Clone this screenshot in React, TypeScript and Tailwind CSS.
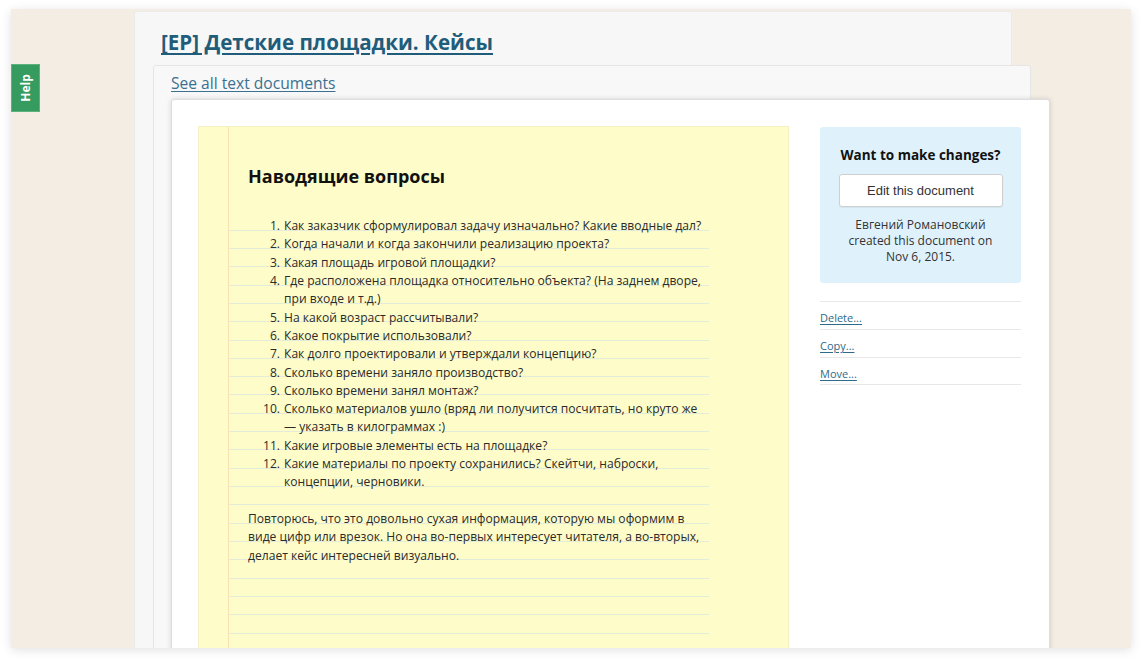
import React from 'react';

const QUESTIONS: React.ReactNode[] = [
  'Как заказчик сформулировал задачу изначально? Какие вводные дал?',
  'Когда начали и когда закончили реализацию проекта?',
  'Какая площадь игровой площадки?',
  <>Где расположена площадка относительно объекта? (На заднем дворе,<br />при входе и т.д.)</>,
  'На какой возраст рассчитывали?',
  'Какое покрытие использовали?',
  'Как долго проектировали и утверждали концепцию?',
  'Сколько времени заняло производство?',
  'Сколько времени занял монтаж?',
  <>Сколько материалов ушло (вряд ли получится посчитать, но круто же<br />— указать в килограммах :)</>,
  'Какие игровые элементы есть на площадке?',
  <>Какие материалы по проекту сохранились? Скейтчи, наброски,<br />концепции, черновики.</>,
];

const ACTIONS = ['Delete...', 'Copy...', 'Move...'];

export default function App() {
  return (
    <div className="w-[1142px] h-[662px] bg-white pt-[9px] pl-[11px] font-['Open_Sans',sans-serif]">
      <div className="relative w-[1120px] h-[639px] bg-[#f4ede4] overflow-hidden shadow-[0_2px_10px_rgba(0,0,0,0.12)]">
        {/* Help tab */}
        <div className="absolute left-0 top-[55px] w-[29px] h-[48px] bg-[#369b5e] border border-[#5cb27f] flex items-center justify-center">
          <span className="-rotate-90 text-white text-[12px] font-bold leading-none">Help</span>
        </div>

        {/* Project panel */}
        <div className="ml-[123px] mt-[2px] w-[878px] h-[700px] bg-[#f7f7f7] border border-[#ebebeb] rounded-[3px] pt-[16px] pl-[26px]">
          <div className="text-[20.6px] leading-[28px] font-bold">
            <a href="#" className="text-[#1f5d7a] underline underline-offset-[3px]">
              [EP] Детские площадки. Кейсы
            </a>
          </div>

          {/* Documents panel */}
          <div className="-ml-[8px] mt-[9px] w-[878px] h-[700px] bg-[#f8f8f8] border border-[#e6e6e6] rounded-[3px] pt-[6px] pl-[17px]">
            <div className="text-[15.6px] leading-[22px]">
              <a href="#" className="text-[#3a7191] underline underline-offset-[2px]">
                See all text documents
              </a>
            </div>

            {/* Document card */}
            <div className="mt-[5px] w-[879px] h-[700px] bg-white border border-[#dedede] rounded-[3px] shadow-[0_0_5px_rgba(0,0,0,0.15)] pt-[26px] pl-[26px] flex gap-[31px]">
              {/* Paper */}
              <div className="w-[591px] h-[600px] bg-[#fefdc9] border border-[#f3f0c4] flex">
                <div className="w-[30px] shrink-0 border-r border-[#f8e1b4]" />
                <div className="w-[480px]">
                  <h2 className="pl-[19px] pt-[37px] text-[18px] leading-[24px] font-bold text-[#111]">
                    Наводящие вопросы
                  </h2>
                  <div className="mt-[29px] pb-[80px] text-[12.1px] leading-[18.32px] text-[#2b2b2b] bg-[image:repeating-linear-gradient(to_bottom,transparent_0px,transparent_12.6px,#e3ebd9_12.6px,#e3ebd9_13.6px,transparent_13.6px,transparent_18.32px)]">
                    <ol>
                      {QUESTIONS.map((q, i) => (
                        <li key={i} className="flex">
                          <span className="w-[55px] shrink-0 text-right pr-[4px]">{i + 1}.</span>
                          <span className="whitespace-nowrap">{q}</span>
                        </li>
                      ))}
                    </ol>
                    <p className="mt-[18.32px] pl-[19px] whitespace-nowrap">
                      Повторюсь, что это довольно сухая информация, которую мы оформим в<br />
                      виде цифр или врезок. Но она во-первых интересует читателя, а во-вторых,<br />
                      делает кейс интересней визуально.
                    </p>
                  </div>
                </div>
              </div>

              {/* Sidebar */}
              <div className="w-[201px] mt-[1px]">
                <div className="bg-[#dff2fc] rounded-[3px] pt-[18px] pb-[18px] px-[10px] text-center">
                  <h3 className="text-[13.5px] leading-[20px] font-bold text-[#111] whitespace-nowrap">Want to make changes?</h3>
                  <button className="mt-[9px] w-[164px] h-[33px] bg-white border border-[#cfcfcf] rounded-[3px] shadow-[0_1px_1px_rgba(0,0,0,0.06)] font-['Liberation_Sans',sans-serif] text-[13px] text-[#333]">
                    Edit this document
                  </button>
                  <p className="mt-[10px] text-[12px] leading-[16px] text-[#333]">
                    Евгений Романовский<br />
                    created this document on<br />
                    Nov 6, 2015.
                  </p>
                </div>
                <div className="mt-[18px]">
                  {ACTIONS.map((a) => (
                    <div key={a} className="border-t border-[#e8e8e8] last:border-b h-[28px] pt-[8px] text-[11px] leading-[15px]">
                      <a href="#" className="text-[#2e6a8a] underline underline-offset-[2px]">{a}</a>
                    </div>
                  ))}
                </div>
              </div>
            </div>
          </div>
        </div>
      </div>
    </div>
  );
}
